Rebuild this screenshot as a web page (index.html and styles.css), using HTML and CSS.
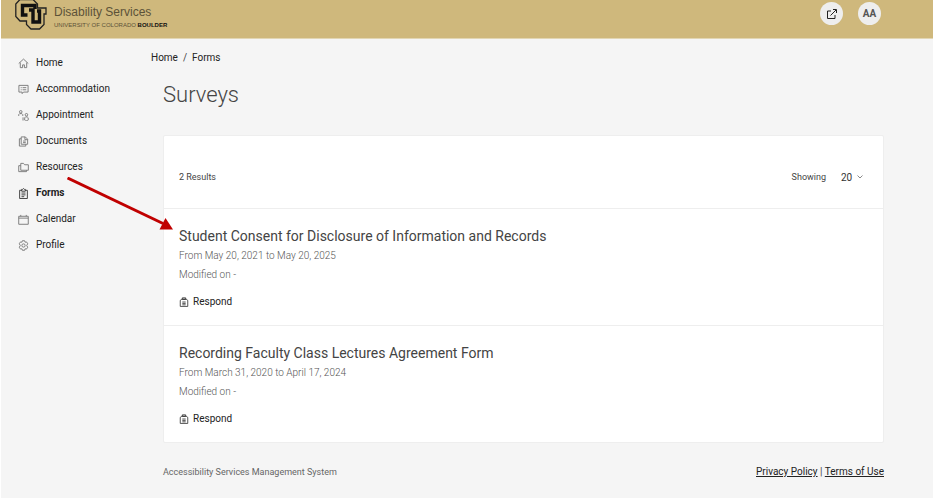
FILE: index.html
```html
<!DOCTYPE html>
<html lang="en">
<head>
  <meta charset="UTF-8">
  <meta name="viewport" content="width=device-width, initial-scale=1.0">
  <title>Surveys - Disability Services</title>
  <link rel="stylesheet" href="styles.css">
</head>
<body>

  <header class="topbar">
    <a class="brand" href="#">
      <svg class="brand-logo" viewBox="0 0 32 32" aria-hidden="true">
        <path class="logo-edge" d="M5 1.500h13l4.500 4.500v4h8.500v6h-2v10.500l-4.500 4.500H16l-4.500-4.500V23H5L.8 18.500V6z"/>
        <path class="logo-line" d="M20 11V7.500H7.500v9.500h5M14 12h4v12h6.500V13H22"/>
      </svg>
      <span class="brand-text">
        <span class="brand-name">Disability Services</span>
        <span class="brand-school">UNIVERSITY OF COLORADO <b>BOULDER</b></span>
      </span>
    </a>
    <div class="topbar-actions">
      <button class="round-button" type="button" aria-label="Open links">
        <svg class="share-icon" viewBox="0 0 12 12" aria-hidden="true"><path d="M5 3H1.500v7.500H9V7M4.500 7.500L10 2M7 1.500h3.500V5"/></svg>
      </button>
      <button class="round-button" type="button">AA</button>
    </div>
  </header>

  <div class="layout">
    <nav class="sidebar">
      <a href="#"><svg class="icon" viewBox="0 0 12 12" aria-hidden="true"><path d="M.8 6L6 1.200 11.200 6M2.500 5v5.500H5v-3h2v3h2.500V5"/></svg>Home</a>
      <a href="#"><svg class="icon" viewBox="0 0 12 12" aria-hidden="true"><path d="M1 1.500h10v7.300H6L4.500 10.500V8.800H1zM3 4h1M5 4h4M3 6.300h1M5 6.300h4"/></svg>Accommodation</a>
      <a href="#"><svg class="icon" viewBox="0 0 12 12" aria-hidden="true"><path d="M.8 6.500V5l1-1h2.400l1 1v1.500M5.500 8v3.500M7.300 11V8.500l1-1h1.800l1 1V11l-1 .8H8.300z"/><circle cx="3" cy="2" r="1.400"/><circle cx="9.200" cy="5.200" r="1.400"/></svg>Appointment</a>
      <a href="#"><svg class="icon" viewBox="0 0 12 12" aria-hidden="true"><path d="M3.500 1h4.500l2.500 2.500V9h-7zM7.500 1v3h3M3.500 3h-2v8h7V9M5.500 5.500h3M5.500 7.200h3"/></svg>Documents</a>
      <a href="#"><svg class="icon" viewBox="0 0 12 12" aria-hidden="true"><path d="M3 1.500h3l1.200 1.500H11.300v6H3zM3 4H.8v6.500h8.500V9"/></svg>Resources</a>
      <a href="#" class="active" aria-current="page"><svg class="icon" viewBox="0 0 12 12" aria-hidden="true"><path d="M4 2.500H1.800v9h8.400v-9H8M4 3.500v-2h1L6 .6l1 .9h1v2zM3.800 5.500h4.400M3.800 7.500h4.400M3.800 9.500h3"/></svg>Forms</a>
      <a href="#"><svg class="icon" viewBox="0 0 12 12" aria-hidden="true"><path d="M.8 2.500h10.400v8.700H.8zM.8 4.500h10.400M3 1v1.500M9 1v1.500"/></svg>Calendar</a>
      <a href="#"><svg class="icon" viewBox="0 0 12 12" aria-hidden="true"><path d="M4.800.8h2.400l.5 1.600 1.600-.3 1.300 2L9.500 6l1.100 1.900-1.300 2-1.600-.3-.5 1.600H4.800l-.5-1.600-1.600.3-1.300-2L2.500 6 1.400 4.100l1.300-2 1.600.3z"/><circle cx="6" cy="6" r="1.800"/></svg>Profile</a>
    </nav>

    <div class="content">
      <nav class="breadcrumb" aria-label="Breadcrumb">
        <a href="#">Home</a><span>/</span><a href="#">Forms</a>
      </nav>

      <main class="page">
        <h1>Surveys</h1>

        <section class="panel">
          <div class="panel-head">
            <span>2 Results</span>
            <div class="showing">
              <label for="pageSize">Showing</label>
              <span class="select-wrap">
                <select id="pageSize">
                  <option>20</option>
                  <option>50</option>
                </select>
                <svg class="chevron" viewBox="0 0 6 4" aria-hidden="true"><path d="M.5.500L3 3 5.500.500"/></svg>
              </span>
            </div>
          </div>

          <article class="survey">
            <h2>Student Consent for Disclosure of Information and Records</h2>
            <p>From May 20, 2021 to May 20, 2025</p>
            <p>Modified on -</p>
            <a class="respond" href="#"><svg class="icon" viewBox="0 0 12 12" aria-hidden="true"><path d="M1.500 4l2-1.500h5l2 1.500v7.300h-9zM4 3V1h4v2zM4 6h4M4 7.700h4M4 9.400h4"/></svg>Respond</a>
          </article>

          <article class="survey">
            <h2>Recording Faculty Class Lectures Agreement Form</h2>
            <p>From March 31, 2020 to April 17, 2024</p>
            <p>Modified on -</p>
            <a class="respond" href="#"><svg class="icon" viewBox="0 0 12 12" aria-hidden="true"><path d="M1.500 4l2-1.500h5l2 1.500v7.300h-9zM4 3V1h4v2zM4 6h4M4 7.700h4M4 9.400h4"/></svg>Respond</a>
          </article>
        </section>

        <footer class="footer">
          <span class="system-name">Accessibility Services Management System</span>
          <span class="legal"><a href="#">Privacy Policy</a> | <a href="#">Terms of Use</a></span>
        </footer>
      </main>
    </div>
  </div>

  <!-- pointer from the menu to the first survey -->
  <svg class="pointer" viewBox="0 0 108 56" aria-hidden="true">
    <path class="pointer-line" d="M1.500 1L97 46.500"/>
    <path class="pointer-head" d="M107 52.500H93.500L99.500 41z"/>
  </svg>

</body>
</html>
```

FILE: styles.css
```css
* {
  margin: 0;
  padding: 0;
  box-sizing: border-box;
}

body {
  font-family: Roboto, "Liberation Sans", sans-serif;
  font-size: 10px;
  line-height: 14px;
  color: #444;
  background: #f5f5f5;
  min-height: 100vh;
  border-left: 1px solid #fff;
  position: relative;
}

a {
  color: #222;
  text-decoration: none;
}

svg {
  fill: none;
  stroke: currentColor;
}

.topbar {
  display: flex;
  justify-content: space-between;
  align-items: flex-start;
  height: 39px;
  padding: 0 52px 0 14px;
  background: #cfb87c;
  border-bottom: 1px solid #e2d6b4;
}

.brand {
  display: flex;
  gap: 7px;
}

.brand-logo {
  width: 32px;
  height: 32px;
  margin-top: -2px;
}

.logo-edge {
  fill: #cfb87c;
  stroke: #222;
  stroke-width: 1.3;
}

.logo-line {
  stroke: #111;
  stroke-width: 3.4;
}

.brand-text {
  display: flex;
  flex-direction: column;
  padding-top: 5px;
  font-family: "Liberation Sans", Arial, sans-serif;
}

.brand-name {
  font-size: 12px;
  color: #5c5238;
}

.brand-school {
  font-size: 6px;
  line-height: 12px;
  color: #5c5238;
}

.brand-school b {
  color: #111;
}

.topbar-actions {
  display: flex;
  gap: 15px;
  padding-top: 2px;
}

.round-button {
  display: flex;
  justify-content: center;
  align-items: center;
  width: 23px;
  height: 23px;
  border: none;
  border-radius: 50%;
  background: #eee;
  color: #555;
  font-family: inherit;
  font-size: 10px;
  font-weight: 700;
  cursor: pointer;
}

.share-icon {
  width: 12px;
  height: 12px;
  stroke: #222;
}

.layout {
  display: grid;
  grid-template-columns: 150px 1fr;
}

.sidebar {
  display: flex;
  flex-direction: column;
  padding: 11px 0 0 17px;
}

.sidebar a {
  display: flex;
  align-items: center;
  gap: 7px;
  height: 26px;
}

.icon {
  width: 11px;
  height: 11px;
  flex: none;
  color: #777;
}

.sidebar .active {
  font-weight: 700;
}

.active .icon {
  color: #333;
}

.breadcrumb {
  display: flex;
  gap: 5px;
  padding-top: 12px;
}

.page {
  padding: 0 49px 0 12px;
}

h1 {
  margin: 15px 0 25px;
  font-size: 22px;
  font-weight: 300;
  line-height: 30px;
}

.panel {
  background: #fff;
  border: 1px solid #eee;
  border-radius: 2px;
}

.panel-head {
  display: flex;
  justify-content: space-between;
  align-items: center;
  height: 72px;
  padding: 10px 20px 0 15px;
  font-size: 9px;
}

.showing {
  display: flex;
  align-items: center;
  gap: 15px;
}

.select-wrap {
  display: flex;
  align-items: center;
  gap: 4px;
}

select {
  appearance: none;
  border: none;
  background: none;
  color: #333;
  font-family: inherit;
  font-size: 10px;
}

.chevron {
  width: 6px;
  height: 4px;
  color: #888;
}

.survey {
  padding: 17px 15px 16px;
  border-top: 1px solid #eee;
}

.survey h2 {
  font-size: 14px;
  font-weight: 400;
  line-height: 20px;
}

.survey p {
  line-height: 19px;
  font-weight: 300;
  color: #555;
}

.respond {
  display: flex;
  align-items: center;
  gap: 4px;
  margin-top: 11px;
}

.respond .icon {
  width: 10px;
  height: 10px;
  color: #333;
}

.footer {
  display: flex;
  justify-content: space-between;
  padding: 22px 0 18px;
}

.system-name {
  font-size: 9px;
  color: #666;
}

.legal a {
  text-decoration: underline;
}

.pointer {
  position: absolute;
  left: 65px;
  top: 177px;
  width: 108px;
  height: 56px;
  pointer-events: none;
}

.pointer-line {
  stroke: #c00000;
  stroke-width: 3;
}

.pointer-head {
  fill: #c00000;
  stroke: none;
}
```
